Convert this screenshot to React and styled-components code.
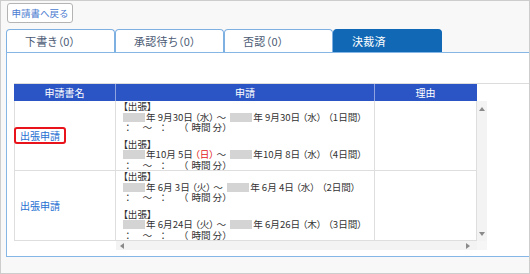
import React from "react";
import styled, { createGlobalStyle } from "styled-components";

const GlobalStyle = createGlobalStyle`
  html, body { margin: 0; padding: 0; }
  body { font-family: "Noto Sans CJK JP", "Noto Sans", sans-serif; }
  * { box-sizing: border-box; }
`;

const Page = styled.div`
  width: 530px;
  height: 274px;
  border: 1px solid #cdcdcd;
  background: #f8f8f8;
  padding: 2px 0 16px 5px;
  display: flex;
  flex-direction: column;
`;

const BackButton = styled.button`
  align-self: flex-start;
  margin-left: 1px;
  width: 66px;
  height: 20px;
  padding: 0;
  border: 1px solid #b4b4b4;
  border-radius: 3px;
  background: #fff;
  color: #4a7bd0;
  font: 9.5px "Noto Sans CJK JP", sans-serif;
`;

const TabBar = styled.div`
  display: flex;
  margin-top: 6px;
  height: 23px;
`;

const Tab = styled.div`
  width: 109px;
  height: 23px;
  padding-left: 18px;
  display: flex;
  align-items: center;
  border: 1px solid ${(p) => (p.$active ? "#1169b6" : "#7fb0e2")};
  border-bottom: none;
  border-radius: 4px 4px 0 0;
  background: ${(p) => (p.$active ? "#1169b6" : "#fff")};
  color: ${(p) => (p.$active ? "#fff" : "#4b5a74")};
  font-size: 11px;
  letter-spacing: 0.3px;
  white-space: pre;
  font-feature-settings: "palt";
`;

const Panel = styled.div`
  flex: 1;
  background: #fff;
  border: 1px solid #86b6e6;
  border-right: none;
  padding: 30px 0 0 7px;
`;

const TableWrap = styled.div`
  border-top: 1px solid #dcdcdc;
`;

const Cols = styled.div`
  display: grid;
  grid-template-columns: 102px 259px 102px;
`;

const HeadCell = styled.div`
  height: 17px;
  background: #2b55c5;
  color: #fff;
  font-size: 10px;
  line-height: 17px;
  text-align: center;
  border-right: 1px solid ${(p) => (p.$last ? "#2b55c5" : "#8ea3df")};
`;

const Body = styled.div`
  display: flex;
`;

const BodyMain = styled.div`
  width: 463px;
`;

const Row = styled(Cols)`
  border-bottom: 1px solid #dedede;
`;

const NameCell = styled.div`
  display: flex;
  align-items: center;
  padding-left: 5px;
  border-left: 1px solid #dedede;
  border-right: 1px solid #dedede;
`;

const Link = styled.a`
  color: #1f6fd2;
  font-size: 10px;
  line-height: 11px;
  text-decoration: none;
  ${(p) =>
    p.$highlight &&
    `
    margin-left: -6px;
    padding: 1px 4px;
    border: 2px solid #e8131b;
    border-radius: 3px;
  `}
`;

const AppCell = styled.div`
  padding-left: 7px;
  border-right: 1px solid #dedede;
  font-size: 9.6px;
  line-height: 10.5px;
  color: #333;
  white-space: pre;
`;

const ReasonCell = styled.div`
  border-right: 1px solid #dedede;
`;

const Entry = styled.div`
  & + & {
    margin-top: 6px;
  }
`;

const Line = styled.div`
  height: 10.5px;
  font-feature-settings: ${(p) => (p.$plain ? "normal" : '"palt"')};
`;

const Mask = styled.span`
  display: inline-block;
  width: 22px;
  height: 9px;
  margin-right: 1px;
  vertical-align: -1px;
  background: #d4d4d4;
`;

const Day = styled.span`
  color: ${(p) => (p.$red ? "#e32222" : "inherit")};
`;

const Tok = styled.span`
  display: inline-block;
  margin-left: ${(p) => p.$gap || 0}px;
`;

const HScrollRow = styled.div`
  display: grid;
  grid-template-columns: 102px 361px;
  height: 9px;
`;

const HBar = styled.div`
  background: #f3f3f3;
  display: flex;
  align-items: center;
  justify-content: space-between;
  padding: 0 7px 0 4px;
`;

const VScroll = styled.div`
  width: 10px;
  display: flex;
  flex-direction: column;
  background: #f3f3f3;
`;

const VTrack = styled.div`
  flex: 1;
  display: flex;
  flex-direction: column;
  justify-content: space-between;
  align-items: center;
  padding: 6px 0 5px;
`;

const Corner = styled.div`
  height: 9px;
  background: #f6f6f6;
`;

const Arrow = ({ dir }) => {
  const pts = {
    up: "0,4 3,0 6,4",
    down: "0,0 6,0 3,4",
    left: "4,0 4,6 0,3",
    right: "0,0 0,6 4,3",
  }[dir];
  const vertical = dir === "up" || dir === "down";
  return (
    <svg width={vertical ? 6 : 4} height={vertical ? 4 : 6} viewBox={vertical ? "0 0 6 4" : "0 0 4 6"}>
      <polygon points={pts} fill="#8a8a8a" />
    </svg>
  );
};

const rows = [
  {
    highlight: true,
    trips: [
      { from: "年 9月30日", fromDay: "水", to: "年 9月30日", toDay: "水", days: 1 },
      { from: "年10月 5日", fromDay: "日", red: true, to: "年10月 8日", toDay: "水", days: 4 },
    ],
  },
  {
    trips: [
      { from: "年 6月 3日", fromDay: "火", to: "年 6月 4日", toDay: "水", days: 2 },
      { from: "年 6月24日", fromDay: "火", to: "年 6月26日", toDay: "木", days: 3 },
    ],
  },
];

const tabs = ["下書き（0）", "承認待ち（0）", "否認（0）", "決裁済"];

function Trip({ t }) {
  return (
    <Entry>
      <Line>【出張】</Line>
      <Line>
        <Mask />
        {t.from}
        <Day $red={t.red}> （{t.fromDay}）</Day>
        {" ～  "}
        <Mask />
        {t.to} （{t.toDay}）{"   "}（{t.days}日間）
      </Line>
      <Line $plain>
        <Tok>：</Tok>
        <Tok $gap={10}>～</Tok>
        <Tok $gap={6}>：</Tok>
        <Tok $gap={11}>（</Tok>
        <Tok $gap={3}>時間</Tok>
        <Tok $gap={2}>分）</Tok>
      </Line>
    </Entry>
  );
}

export default function App() {
  return (
    <>
      <GlobalStyle />
      <Page>
        <BackButton>申請書へ戻る</BackButton>
        <TabBar>
          {tabs.map((t, i) => (
            <Tab key={t} $active={i === 3}>
              {t}
            </Tab>
          ))}
        </TabBar>
        <Panel>
          <TableWrap>
            <Cols>
              <HeadCell>申請書名</HeadCell>
              <HeadCell>申請</HeadCell>
              <HeadCell $last>理由</HeadCell>
            </Cols>
            <Body>
              <BodyMain>
                {rows.map((r, i) => (
                  <Row key={i}>
                    <NameCell>
                      <Link href="#" $highlight={r.highlight}>
                        出張申請
                      </Link>
                    </NameCell>
                    <AppCell>
                      {r.trips.map((t, j) => (
                        <Trip key={j} t={t} />
                      ))}
                    </AppCell>
                    <ReasonCell />
                  </Row>
                ))}
                <HScrollRow>
                  <div />
                  <HBar>
                    <Arrow dir="left" />
                    <Arrow dir="right" />
                  </HBar>
                </HScrollRow>
              </BodyMain>
              <VScroll>
                <VTrack>
                  <Arrow dir="up" />
                  <Arrow dir="down" />
                </VTrack>
                <Corner />
              </VScroll>
            </Body>
          </TableWrap>
        </Panel>
      </Page>
    </>
  );
}
